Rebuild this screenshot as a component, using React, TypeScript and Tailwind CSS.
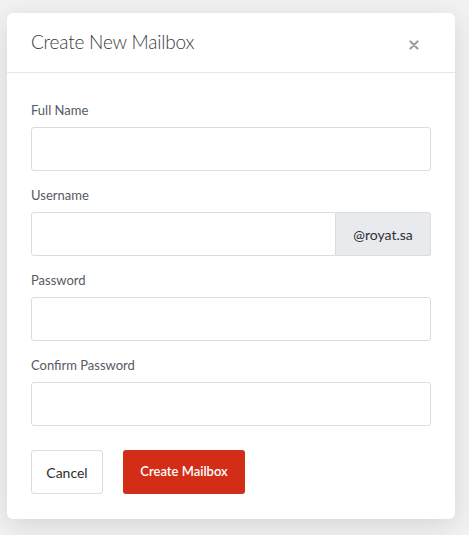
export default function App() {
  const fields = [
    { label: "Full Name" },
    { label: "Username", addon: "@royat.sa" },
    { label: "Password", type: "password" },
    { label: "Confirm Password", type: "password" },
  ];

  return (
    <div
      className="min-h-[535px] w-[469px] bg-[#f2f2f2] pt-[13px] pl-[7px]"
      style={{ fontFamily: "Lato, 'Open Sans', sans-serif" }}
    >
      <div className="w-[448px] rounded-[6px] bg-white shadow-[0_6px_28px_rgba(0,0,0,0.12)]">
        <div className="flex h-[60px] items-center justify-between border-b border-[#e6e6e6] pl-6 pr-[36px]">
          <h2 className="text-[19px] font-light tracking-[-0.2px] text-[#3b3b3b]">Create New Mailbox</h2>
          <svg width="10" height="10" viewBox="0 0 10 10" className="mt-[5px]">
            <path d="M1.5 1.5 L8.5 8.5 M8.5 1.5 L1.5 8.5" stroke="#9b9ea8" strokeWidth="2.2" strokeLinecap="round" />
          </svg>
        </div>
        <div className="px-6 pt-[27px] pb-[25px]">
          <div className="flex flex-col gap-[14px]">
            {fields.map((f) => (
              <div key={f.label}>
                <label className="mb-[7px] block text-[13px] leading-5 text-[#555a63]">{f.label}</label>
                <div className="flex h-[44px] w-[400px]">
                  <input
                    type={f.type || "text"}
                    className={`h-full min-w-0 flex-1 border border-[#dcdcdc] bg-white px-3 outline-none ${
                      f.addon ? "rounded-l-[3px]" : "rounded-[3px]"
                    }`}
                  />
                  {f.addon ? (
                    <span className="flex h-full w-[95px] items-center justify-center rounded-r-[3px] border border-l-0 border-[#dcdcdc] bg-[#e9eaed] text-[14px] text-[#2b2f38]">
                      {f.addon}
                    </span>
                  ) : null}
                </div>
              </div>
            ))}
          </div>
          <div className="mt-[24px] flex gap-5">
            <button className="h-[44px] w-[72px] rounded-[3px] border border-[#dcdcdc] bg-white text-[14px] text-[#2e2e2e]">
              Cancel
            </button>
            <button className="h-[44px] w-[122px] rounded-[3px] bg-[#d32d17] text-[13px] font-semibold text-white">
              Create Mailbox
            </button>
          </div>
        </div>
      </div>
    </div>
  );
}
